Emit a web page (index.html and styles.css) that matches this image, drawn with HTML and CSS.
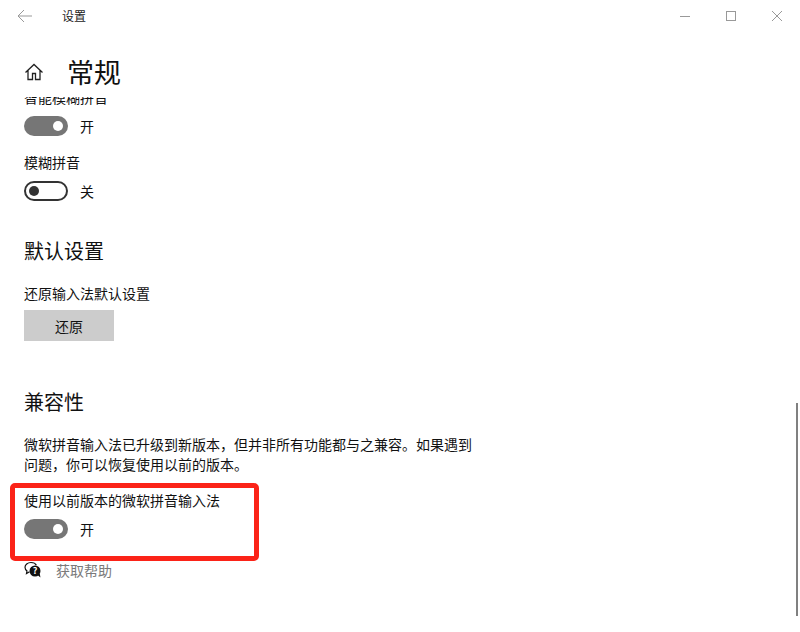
FILE: index.html
```html
<!DOCTYPE html>
<html lang="zh-CN">
<head>
<meta charset="utf-8">
<title>设置</title>
<link rel="stylesheet" href="styles.css">
</head>
<body>
<div class="window">
  <header class="titlebar">
    <svg class="back" width="16" height="14" viewBox="0 0 16 14"><path d="M7 1 1 7l6 6M1 7h14" fill="none" stroke="#999" stroke-width="1"/></svg>
    <span class="app-name">设置</span>
    <div class="controls">
      <svg width="12" height="12" viewBox="0 0 12 12"><path d="M1 6.5h10" stroke="#999" stroke-width="1"/></svg>
      <svg width="12" height="12" viewBox="0 0 12 12"><rect x="1.5" y="1.5" width="9" height="9" fill="none" stroke="#999" stroke-width="1"/></svg>
      <svg width="12" height="12" viewBox="0 0 12 12"><path d="M1 1l10 10M11 1 1 11" stroke="#999" stroke-width="1"/></svg>
    </div>
  </header>
  <div class="page-head">
    <svg class="home" width="20" height="20" viewBox="0 0 20 20"><path d="M1.5 10.5 10 2.5l8.500 8M4 8.500V17.500h4.500v-6h3v6H16V8.500" fill="none" stroke="#222" stroke-width="1.300"/></svg>
    <h1>常规</h1>
  </div>
  <main class="content">
    <div class="first-label">智能模糊拼音</div>
    <div class="toggle-row">
      <span class="toggle on"></span><span class="state">开</span>
    </div>
    <div class="label fuzzy">模糊拼音</div>
    <div class="toggle-row">
      <span class="toggle off"></span><span class="state">关</span>
    </div>
    <h2 class="defaults">默认设置</h2>
    <div class="label reset-label">还原输入法默认设置</div>
    <button class="reset">还原</button>
    <h2 class="compat">兼容性</h2>
    <p class="desc">微软拼音输入法已升级到新版本，但并非所有功能都与之兼容。如果遇到问题，你可以恢复使用以前的版本。</p>
    <div class="label legacy">使用以前版本的微软拼音输入法</div>
    <div class="toggle-row">
      <span class="toggle on"></span><span class="state">开</span>
    </div>
    <a class="help">
      <svg width="18" height="18" viewBox="0 0 18 18"><path d="M7 1.500C3.500 1.500 1 3.700 1 6.300c0 1.500.8 2.800 2 3.600L2.500 12.500l3-1.700" fill="none" stroke="#111" stroke-width="1.200"/><path d="M7 1.500c2.400 0 4.500 1 5.400 2.800" fill="none" stroke="#111" stroke-width="1.200"/><circle cx="11" cy="10" r="5.500" fill="#111"/><path d="M13.500 14l3 2.500-.8-4z" fill="#111"/><text x="11" y="13" class="help-mark">?</text></svg>
      <span>获取帮助</span>
    </a>
  </main>
  <div class="highlight"></div>
  <div class="scrollbar"></div>
</div>
</body>
</html>
```

FILE: styles.css
```css
* { box-sizing: border-box; }
html, body { margin: 0; padding: 0; background: #fff; }
body { font-family: "Noto Sans CJK SC", "Noto Sans", sans-serif; color: #111; }
.window { position: relative; width: 800px; height: 632px; overflow: hidden; background: #fff; }

.titlebar { display: flex; align-items: center; height: 32px; padding-left: 17px; }
.back { flex: none; }
.app-name { margin-left: 29px; font-size: 12px; line-height: 16px; color: #222; }
.controls { display: flex; gap: 34px; margin-left: auto; margin-right: 17px; align-items: center; }
.controls svg { display: block; margin-left: 0; }

.page-head { display: flex; align-items: center; height: 65px; padding-left: 24px; }
.home { flex: none; margin-top: 15px; }
.page-head h1 { margin: 14px 0 0 23px; font-size: 27px; line-height: 40px; font-weight: 400; color: #111; }

.content { height: 535px; overflow: hidden; padding-left: 24px; }
.first-label { margin-top: -10px; font-size: 14px; line-height: 20px; height: 20px; }
.label { font-size: 14px; line-height: 20px; color: #111; }

.toggle-row { display: flex; align-items: center; height: 20px; margin-top: 9px; }
.toggle { position: relative; display: block; width: 44px; height: 20px; border-radius: 10px; flex: none; }
.toggle::after { content: ""; position: absolute; top: 5px; width: 10px; height: 10px; border-radius: 50%; }
.toggle.on { background: #767676; }
.toggle.on::after { right: 5px; background: #fff; }
.toggle.off { border: 2px solid #333; background: #fff; }
.toggle.off::after { left: 3px; top: 3px; background: #333; }
.state { margin-left: 12px; font-size: 14px; line-height: 20px; }

.fuzzy { margin-top: 16px; }
h2 { margin: 0; font-size: 20px; line-height: 28px; font-weight: 400; color: #111; }
.defaults { margin-top: 36px; }
.reset-label { margin-top: 18px; }
.reset { display: block; width: 90px; height: 31px; margin: 7px 0 0; padding: 0; border: 0; background: #ccc; font: inherit; font-size: 14px; color: #111; }
.compat { margin-top: 47px; }
.desc { width: 456px; margin: 18px 0 0; font-size: 14px; line-height: 20px; color: #111; }
.legacy { margin-top: 16px; }
.help { display: flex; align-items: center; margin-top: 21px; font-size: 13.500px; line-height: 20px; color: #7a7a7a; }
.help svg { flex: none; margin-right: 14px; }
.help span { font-size: 14px; }
.help-mark { font-size: 9px; font-weight: 700; fill: #fff; text-anchor: middle; }

.highlight { position: absolute; left: 10px; top: 483px; width: 249px; height: 78px; border: 5px solid #fb2318; border-radius: 5px; }
.scrollbar { position: absolute; left: 796px; top: 403px; width: 2px; height: 213px; background: #808080; }
```
